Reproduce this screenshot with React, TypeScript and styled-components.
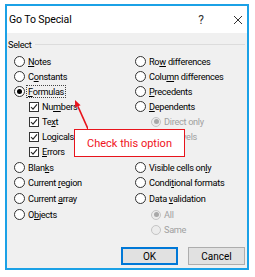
import { createGlobalStyle, styled } from "styled-components";

const GlobalStyle = createGlobalStyle`
  html, body { margin: 0; padding: 0; background: #fff; }
  body { font-family: Roboto, "Noto Sans", sans-serif; color: #000; }
`;

const Dialog = styled.div`
  position: relative;
  margin: 4px 0 0 5px;
  width: 244px;
  height: 266px;
  box-sizing: border-box;
  border: 2px solid #1ba1e6;
  display: flex;
  flex-direction: column;
  background: #f0f0f0;
`;

const TitleBar = styled.div`
  height: 27px;
  flex: none;
  background: #fff;
  display: flex;
  align-items: center;
  padding-left: 2px;
  font-size: 10.5px;
  letter-spacing: -0.1px;
`;

const Title = styled.span`
  flex: 1;
`;

const TitleButton = styled.span<{ $w: number; $ml?: number }>`
  width: ${(p) => p.$w}px;
  margin-left: ${(p) => p.$ml ?? 0}px;
  display: flex;
  justify-content: center;
  align-items: center;
  font-size: 12px;
  color: #333;
`;

const Body = styled.div`
  flex: 1;
  display: flex;
  flex-direction: column;
  padding: 4px 2px 3px 1px;
  font-size: 9.2px;
  letter-spacing: -0.3px;
`;

const GroupHeader = styled.div`
  height: 14px;
  display: flex;
  align-items: center;
  gap: 4px;
  &::after {
    content: "";
    flex: 1;
    height: 1px;
    background: #dcdcdc;
  }
`;

const Columns = styled.div`
  margin-top: 3px;
  padding-left: 6px;
  display: grid;
  grid-template-columns: 121px 1fr;
`;

const Column = styled.div`
  display: flex;
  flex-direction: column;
`;

const Row = styled.div<{ $indent?: number; $gap?: boolean; $disabled?: boolean }>`
  height: 15px;
  display: flex;
  align-items: center;
  white-space: nowrap;
  padding-left: ${(p) => p.$indent ?? 0}px;
  margin-top: ${(p) => (p.$gap ? 1 : 0)}px;
  color: ${(p) => (p.$disabled ? "#a0a0a0" : "#000")};
`;

const Spacer = styled.div`
  height: 15px;
`;

const Radio = styled.span<{ $checked?: boolean; $disabled?: boolean; $size?: number }>`
  width: ${(p) => p.$size ?? 11}px;
  height: ${(p) => p.$size ?? 11}px;
  box-sizing: border-box;
  flex: none;
  border-radius: 50%;
  border: 1px solid ${(p) => (p.$disabled ? "#c4c4c4" : "#333")};
  background: ${(p) => (p.$disabled ? "#ececec" : "#fff")};
  margin-right: 3px;
  display: flex;
  align-items: center;
  justify-content: center;
  &::after {
    content: "";
    display: ${(p) => (p.$checked ? "block" : "none")};
    width: 5px;
    height: 5px;
    border-radius: 50%;
    background: ${(p) => (p.$disabled ? "#a8a8a8" : "#000")};
  }
`;

const Box = styled.span`
  width: 10px;
  height: 10px;
  box-sizing: border-box;
  flex: none;
  border: 1px solid #333;
  background: #fff;
  margin-right: 3px;
  display: flex;
  align-items: center;
  justify-content: center;
`;

const Focus = styled.span`
  outline: 1px dotted #444;
  outline-offset: 0;
  padding: 0 1px;
  margin-left: -1px;
`;

const Footer = styled.div`
  margin-top: auto;
  display: flex;
  justify-content: flex-end;
  gap: 10px;
`;

const Button = styled.button<{ $primary?: boolean }>`
  width: 57px;
  height: 18px;
  box-sizing: border-box;
  padding: 0;
  font-family: inherit;
  font-size: 10px;
  color: #000;
  background: #e1e1e1;
  border: 1px solid ${(p) => (p.$primary ? "#0078d7" : "#adadad")};
  box-shadow: ${(p) => (p.$primary ? "inset 0 0 0 1px #0078d7" : "none")};
`;

const Callout = styled.div`
  position: absolute;
  left: 67px;
  top: 123px;
  width: 111px;
  height: 28px;
  box-sizing: border-box;
  border: 1px solid #e8141c;
  background: #fff;
  color: #f0141c;
  font-size: 11px;
  display: flex;
  align-items: center;
  justify-content: center;
`;

const Arrow = styled.svg`
  position: absolute;
  left: 57px;
  top: 90px;
`;

function Label({ text, k }: { text: string; k?: number }) {
  if (k === undefined) return <span>{text}</span>;
  return (
    <span>
      {text.slice(0, k)}
      <u>{text[k]}</u>
      {text.slice(k + 1)}
    </span>
  );
}

function Check() {
  return (
    <svg width="8" height="8" viewBox="0 0 8 8">
      <path d="M1 4 L3 6.2 L7 1.3" fill="none" stroke="#222" strokeWidth="1.1" />
    </svg>
  );
}

export default function App() {
  return (
    <>
      <GlobalStyle />
      <Dialog>
        <TitleBar>
          <Title>Go To Special</Title>
          <TitleButton $w={20}>?</TitleButton>
          <TitleButton $w={18} $ml={18}>
            <svg width="10" height="10" viewBox="0 0 10 10">
              <path d="M1 1 L9 9 M9 1 L1 9" stroke="#333" strokeWidth="1" />
            </svg>
          </TitleButton>
        </TitleBar>
        <Body>
          <GroupHeader>Select</GroupHeader>
          <Columns>
            <Column>
              <Row><Radio /><Label text="Notes" k={0} /></Row>
              <Row><Radio /><Label text="Constants" k={1} /></Row>
              <Row>
                <Radio $checked />
                <Focus><Label text="Formulas" k={0} /></Focus>
              </Row>
              <Row $indent={15}><Box><Check /></Box><Label text="Numbers" k={2} /></Row>
              <Row $indent={15}><Box><Check /></Box><Label text="Text" k={2} /></Row>
              <Row $indent={15}><Box><Check /></Box><Label text="Logicals" k={2} /></Row>
              <Row $indent={15}><Box><Check /></Box><Label text="Errors" k={0} /></Row>
              <Row $gap><Radio /><Label text="Blanks" k={4} /></Row>
              <Row><Radio /><Label text="Current region" k={8} /></Row>
              <Row $gap><Radio /><Label text="Current array" k={8} /></Row>
              <Row $gap><Radio /><Label text="Objects" k={1} /></Row>
            </Column>
            <Column>
              <Row><Radio /><Label text="Row differences" k={2} /></Row>
              <Row><Radio /><Label text="Column differences" k={4} /></Row>
              <Row><Radio /><Label text="Precedents" k={0} /></Row>
              <Row><Radio /><Label text="Dependents" k={0} /></Row>
              <Row $indent={16} $disabled><Radio $checked $disabled $size={10} /><Label text="Direct only" /></Row>
              <Row $indent={16} $disabled><Radio $disabled $size={10} /><Label text="All levels" /></Row>
              <Spacer />
              <Row $gap><Radio /><Label text="Visible cells only" k={16} /></Row>
              <Row><Radio /><Label text="Conditional formats" k={5} /></Row>
              <Row $gap><Radio /><Label text="Data validation" k={5} /></Row>
              <Row $indent={16} $gap $disabled><Radio $checked $disabled $size={10} /><Label text="All" /></Row>
              <Row $indent={16} $disabled><Radio $disabled $size={10} /><Label text="Same" /></Row>
            </Column>
          </Columns>
          <Footer>
            <Button $primary>OK</Button>
            <Button>Cancel</Button>
          </Footer>
        </Body>
        <Arrow width="24" height="36" viewBox="0 0 24 36">
          <line x1="24" y1="33" x2="13.9" y2="10.4" stroke="#e8141c" strokeWidth="1.6" />
          <polygon points="11,4 16.6,9.2 11.1,11.6" fill="#e8141c" />
        </Arrow>
        <Callout>Check this option</Callout>
      </Dialog>
    </>
  );
}
